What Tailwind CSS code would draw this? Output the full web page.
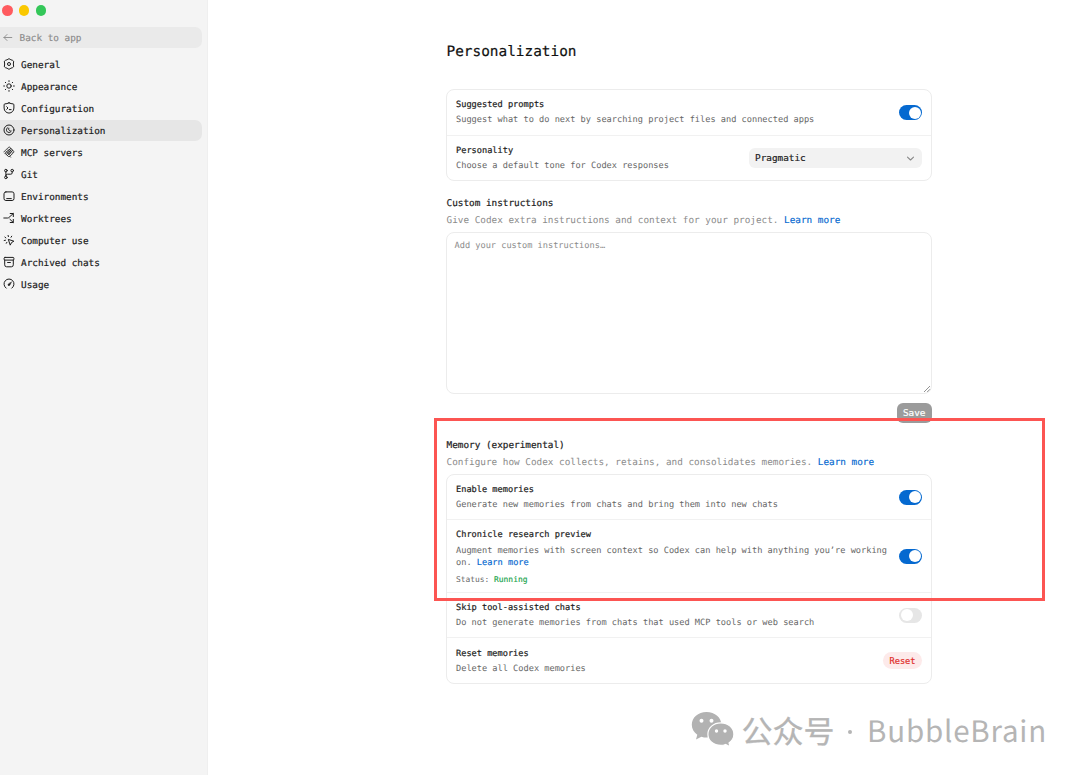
<!DOCTYPE html>
<html lang="en">
<head>
<meta charset="utf-8">
<title>Personalization</title>
<script src="https://cdn.jsdelivr.net/npm/@tailwindcss/browser@4"></script>
</head>
<body class="relative flex h-[775px] w-[1080px] overflow-hidden bg-white font-['DejaVu_Sans_Mono',monospace] text-[#1c1c1c] [text-rendering:geometricPrecision]">

<aside class="flex w-[208px] shrink-0 flex-col border-r border-[#efefef] bg-[#f4f4f4]">
  <div class="flex h-[27px] gap-[6.3px] pt-[5px] pl-[2px]">
    <span class="size-[10.5px] rounded-full bg-[#ff5b5f]"></span>
    <span class="size-[10.5px] rounded-full bg-[#fac800]"></span>
    <span class="size-[10.5px] rounded-full bg-[#34c759]"></span>
  </div>
  <div class="mr-[5.5px] flex h-[21px] items-center gap-[5.5px] rounded-r-[7px] bg-[#eaeaea] pl-[2px] text-[9.36px] text-[#8b8b8b] [-webkit-text-stroke:0.15px]">
    <svg class="size-[12px]" viewBox="0 0 12 12" fill="none" stroke="currentColor" stroke-width="0.9" stroke-linecap="round" stroke-linejoin="round"><path d="M2 5.5H9.8M5 2.5L2 5.5L5 8.5"/></svg>
    <span class="pt-[3px]">Back to app</span>
  </div>
  <nav class="mt-[6px] flex flex-col gap-px text-[9.36px] [-webkit-text-stroke:0.2px] [&_span]:pt-[3px] [&_svg]:mb-px">
    <a class="mr-[5.5px] flex h-[21px] items-center gap-[6.5px] pl-[2.5px]"><svg class="size-[12px]" viewBox="0 0 12 12" fill="none" stroke="currentColor" stroke-width="1" stroke-linejoin="round"><path d="M5.1 1.1Q6 .5 6.9 1.1L7.9 1.8L9.5 2.3Q10.6 2.8 10.7 3.8L10.4 5L10.4 7L10.7 8.2Q10.6 9.2 9.5 9.7L7.9 10.2L6.9 10.9Q6 11.5 5.1 10.9L4.1 10.2L2.5 9.7Q1.4 9.2 1.3 8.2L1.6 7L1.6 5L1.3 3.8Q1.4 2.8 2.5 2.3L4.1 1.8Z"/><circle cx="6" cy="6" r="1.5"/></svg><span>General</span></a>
    <a class="mr-[5.5px] flex h-[21px] items-center gap-[6.5px] pl-[2.5px]"><svg class="size-[12px]" viewBox="0 0 12 12" fill="none" stroke="currentColor" stroke-width="1" stroke-linecap="round"><circle cx="6" cy="6" r="2.2"/><path d="M6 .7V1.5M6 10.5V11.3M.7 6H1.5M10.5 6H11.3M2.3 2.3L2.8 2.8M9.2 9.2L9.7 9.7M2.3 9.7L2.8 9.2M9.2 2.8L9.7 2.3"/></svg><span>Appearance</span></a>
    <a class="mr-[5.5px] flex h-[21px] items-center gap-[6.5px] pl-[2.5px]"><svg class="size-[12px]" viewBox="0 0 12 12" fill="none" stroke="currentColor" stroke-width="1" stroke-linecap="round" stroke-linejoin="round"><path d="M6 .9C4.6 1.6 3.2 1.8 1.9 1.9Q1.1 2 1.1 2.8V6C1.1 9 3.2 10.9 6 11.1C8.8 10.9 10.9 9 10.9 6V2.8Q10.9 2 10.1 1.9C8.8 1.8 7.4 1.6 6 .9ZM3.7 4.7L5 6L3.7 7.3M6.3 7.6H8.1"/></svg><span>Configuration</span></a>
    <a class="mr-[5.5px] flex h-[21px] items-center gap-[6.5px] rounded-r-[7px] bg-[#e6e6e6] pl-[2.5px]"><svg class="size-[12px]" viewBox="0 0 12 12" fill="none" stroke="currentColor" stroke-width="1" stroke-linecap="round" stroke-linejoin="round"><circle cx="6" cy="6" r="5"/><path d="M4.8 3.5C2.9 4.5 2.9 7.5 5.1 8.3C6.5 8.8 7.9 8.1 8.4 7M5.8 4.2C5.2 5.4 5.8 6.7 7.2 6.8"/></svg><span>Personalization</span></a>
    <a class="mr-[5.5px] flex h-[21px] items-center gap-[6.5px] pl-[2.5px]"><svg class="size-[12px]" viewBox="0 0 12 12" fill="none" stroke="currentColor" stroke-width="0.8" stroke-linecap="round" stroke-linejoin="round"><path d="M.8 6L5.4 1.4Q6.4 .6 7.2 1.5Q7.8 2.2 7.3 2.9Q8.4 2.4 9.1 3.2Q9.6 3.9 9.2 4.7Q10.2 4.3 10.8 5.2Q11.2 6 10.5 6.7L6.8 10.3L7.6 11.2M2 7.2L7.3 2.9M3.2 8.4L8.3 3.8M4.4 9.6L9.2 4.7M3.3 5.5L6.8 9M4.6 4.2L8.1 7.7M5.7 3.1L9.2 6.6M2 7.2L5.4 10.6L6.8 10.3"/></svg><span>MCP servers</span></a>
    <a class="mr-[5.5px] flex h-[21px] items-center gap-[6.5px] pl-[2.5px]"><svg class="size-[12px]" viewBox="0 0 12 12" fill="none" stroke="currentColor" stroke-width="1" stroke-linecap="round"><circle cx="2.9" cy="2.6" r="1.3"/><circle cx="9.2" cy="2.6" r="1.3"/><circle cx="2.9" cy="9.4" r="1.3"/><path d="M2.9 3.9V8.1M9.2 3.9V4.8Q9.2 6.2 7.8 6.2H4.4Q2.9 6.2 2.9 7.5"/></svg><span>Git</span></a>
    <a class="mr-[5.5px] flex h-[21px] items-center gap-[6.5px] pl-[2.5px]"><svg class="size-[12px]" viewBox="0 0 12 12" fill="none" stroke="currentColor" stroke-width="1" stroke-linecap="round"><rect x="1" y="1.9" width="10" height="8.6" rx="1.9"/><path d="M3.7 8.6H8.3"/></svg><span>Environments</span></a>
    <a class="mr-[5.5px] flex h-[21px] items-center gap-[6.5px] pl-[2.5px]"><svg class="size-[12px]" viewBox="0 0 12 12" fill="none" stroke="currentColor" stroke-width="1" stroke-linecap="round" stroke-linejoin="round"><path d="M.8 6H4.7Q5.4 6 6 5.4L10.3 1.5M7.2 1.5H10.3V4.6M6.9 7.3L10.3 10.5M10.3 7.4V10.5H7.2"/></svg><span>Worktrees</span></a>
    <a class="mr-[5.5px] flex h-[21px] items-center gap-[6.5px] pl-[2.5px]"><svg class="size-[12px]" viewBox="0 0 12 12" fill="none" stroke="currentColor" stroke-width="1" stroke-linecap="round" stroke-linejoin="round"><path d="M5.7 5.5L10.9 7.2L8.6 8.5L7.4 10.8ZM5.1 1.4L5.4 2.6M8.7 2.2L8 3.3M1.9 3.1L2.9 3.9M1.2 6.5L2.5 6.2M3.3 9.3L3.9 8.3"/></svg><span>Computer use</span></a>
    <a class="mr-[5.5px] flex h-[21px] items-center gap-[6.5px] pl-[2.5px]"><svg class="size-[12px]" viewBox="0 0 12 12" fill="none" stroke="currentColor" stroke-width="1" stroke-linecap="round"><rect x="1.1" y="1.4" width="9.8" height="2.7" rx=".9"/><path d="M1.7 4.1V8.8Q1.7 10.8 3.6 10.8H8.4Q10.3 10.8 10.3 8.8V4.1M4.6 6.5H7.4"/></svg><span>Archived chats</span></a>
    <a class="mr-[5.5px] flex h-[21px] items-center gap-[6.5px] pl-[2.5px]"><svg class="size-[12px]" viewBox="0 0 12 12" fill="none" stroke="currentColor" stroke-width="1" stroke-linecap="round" stroke-linejoin="round"><path d="M3.2 10.2A5 5 0 1 1 8.8 10.2"/><path d="M8.4 4.2L6.8 7.2Q6 8 5.2 7.4Q4.7 6.6 5.4 5.9Z" fill="currentColor" stroke-width=".5"/></svg><span>Usage</span></a>
  </nav>
</aside>

<main class="flex w-[724px] shrink-0 flex-col pl-[238px] text-[8.64px] whitespace-nowrap">
  <h1 class="mt-[42px] h-[20px] pl-[0.5px] text-[14.4px] leading-[20px] text-[#111] [-webkit-text-stroke:0.2px]">Personalization</h1>

  <section class="mt-[27px] h-[92px] rounded-[8px] border border-[#ececec]">
    <div class="flex h-[46px] items-center justify-between border-b border-[#f1f1f1] pr-[9px] pl-[9px]">
      <div class="pt-[1px] leading-[15px]">
        <h2 class="[-webkit-text-stroke:0.2px]">Suggested prompts</h2>
        <p class="text-[#666]">Suggest what to do next by searching project files and connected apps</p>
      </div>
      <span class="flex h-[15px] w-[23.5px] items-center justify-end rounded-full bg-[#0569d0] pr-[1.5px]"><i class="size-[12px] rounded-full bg-white"></i></span>
    </div>
    <div class="flex h-[44px] items-center justify-between pr-[9px] pl-[9px]">
      <div class="pt-[2px] leading-[15px]">
        <h2 class="[-webkit-text-stroke:0.2px]">Personality</h2>
        <p class="text-[#666]">Choose a default tone for Codex responses</p>
      </div>
      <button class="flex h-[20px] w-[173px] items-center justify-between rounded-[6px] bg-[#f2f2f2] pr-[7px] pl-[6px] text-[9.36px] [-webkit-text-stroke:0.2px]"><span>Pragmatic</span><svg class="size-[9px] text-[#888]" viewBox="0 0 9 9" fill="none" stroke="currentColor" stroke-width="1.1" stroke-linecap="round" stroke-linejoin="round"><path d="M1.5 3.2L4.5 6L7.5 3.2"/></svg></button>
    </div>
  </section>

  <h2 class="mt-[15px] pl-[0.5px] text-[9.36px] leading-[16px] [-webkit-text-stroke:0.2px]">Custom instructions</h2>
  <p class="mt-px pl-[0.5px] text-[9.36px] leading-[16px] text-[#8b8b8b]">Give Codex extra instructions and context for your project. <a class="text-[#0569d0] [-webkit-text-stroke:0.15px]">Learn more</a></p>
  <div class="mt-[3px] flex h-[162px] flex-col justify-between rounded-[8px] border border-[#ececec] pt-[6px] pl-[7.5px]">
    <p class="leading-[15px] text-[#8b8b8b]">Add your custom instructions…</p>
    <svg class="size-[8px] self-end" viewBox="0 0 8 8" fill="none" stroke="#777" stroke-width=".8"><path d="M1 7L7 1M4.2 7L7 4.2"/></svg>
  </div>
  <button class="mt-[9px] flex h-[20px] w-[35.5px] items-center justify-center self-end rounded-[6px] bg-[#9b9b9b] text-[9.36px] text-white [-webkit-text-stroke:0.2px]">Save</button>

  <h2 class="mt-[15px] pl-[0.5px] text-[9.36px] leading-[16px] [-webkit-text-stroke:0.2px]">Memory (experimental)</h2>
  <p class="mt-px pl-[0.5px] text-[9.36px] leading-[16px] text-[#8b8b8b]">Configure how Codex collects, retains, and consolidates memories. <a class="text-[#0569d0] [-webkit-text-stroke:0.15px]">Learn more</a></p>
  <section class="mt-[3px] h-[210px] rounded-[8px] border border-[#ececec]">
    <div class="flex h-[45px] items-center justify-between border-b border-[#f1f1f1] pr-[9px] pl-[9px]">
      <div class="pt-[2px] leading-[15px]">
        <h3 class="[-webkit-text-stroke:0.2px]">Enable memories</h3>
        <p class="text-[#666]">Generate new memories from chats and bring them into new chats</p>
      </div>
      <span class="flex h-[15px] w-[23.5px] items-center justify-end rounded-full bg-[#0569d0] pr-[1.5px]"><i class="size-[12px] rounded-full bg-white"></i></span>
    </div>
    <div class="flex h-[73px] items-center justify-between border-b border-[#f1f1f1] pr-[9px] pl-[9px]">
      <div class="pt-[2px] text-[#666]">
        <h3 class="leading-[15px] text-[#1c1c1c] [-webkit-text-stroke:0.2px]">Chronicle research preview</h3>
        <p class="mt-[2px] leading-[12.5px]">Augment memories with screen context so Codex can help with anything you’re working<br>on. <a class="text-[#0569d0] [-webkit-text-stroke:0.15px]">Learn more</a></p>
        <p class="mt-[2px] text-[7.92px] leading-[15px]">Status: <span class="text-[#16a34a] [-webkit-text-stroke:0.15px]">Running</span></p>
      </div>
      <span class="flex h-[15px] w-[23.5px] items-center justify-end rounded-full bg-[#0569d0] pr-[1.5px]"><i class="size-[12px] rounded-full bg-white"></i></span>
    </div>
    <div class="flex h-[45px] items-center justify-between border-b border-[#f1f1f1] pr-[9px] pl-[9px]">
      <div class="pt-[2px] leading-[15px]">
        <h3 class="[-webkit-text-stroke:0.2px]">Skip tool-assisted chats</h3>
        <p class="text-[#666]">Do not generate memories from chats that used MCP tools or web search</p>
      </div>
      <span class="flex h-[15px] w-[23.5px] items-center rounded-full bg-[#e6e6e6] pl-[2px]"><i class="size-[12px] rounded-full bg-white"></i></span>
    </div>
    <div class="flex h-[45px] items-center justify-between pr-[9px] pl-[9px]">
      <div class="pt-[2px] leading-[15px]">
        <h3 class="[-webkit-text-stroke:0.2px]">Reset memories</h3>
        <p class="text-[#666]">Delete all Codex memories</p>
      </div>
      <button class="flex h-[17px] w-[39px] items-center justify-center rounded-full bg-[#fdeaea] pt-px text-[8.64px] text-[#e02e2a] [-webkit-text-stroke:0.2px]">Reset</button>
    </div>
  </section>
</main>

<!-- Highlight frame around the memory section -->
<div class="absolute top-[417.5px] left-[434px] h-[183px] w-[611px] border-3 border-[#fc5552]"></div>

<!-- Watermark -->
<div class="absolute top-[707px] left-[691px] flex h-[46px] items-center font-['Noto_Sans_CJK_SC',sans-serif] text-[31px] whitespace-nowrap text-[#b5b5b5]">
  <svg class="h-[36px] w-[44px]" viewBox="0 0 44 36"><path fill="#b2b2b2" d="M15.5 0C7 0 .8 5.5.8 12.8C.8 17 3 20.4 6.3 22.7L5 27.4L10.4 24.7Q13 25.6 15.5 25.6C24 25.6 30.4 20 30.4 12.8C30.4 5.5 24 0 15.5 0Z"/><path fill="#b2b2b2" stroke="#fff" stroke-width="1.2" d="M29.8 10.8C22.5 10.8 16.9 15.8 16.9 22.2C16.9 28.6 22.5 33.4 29.8 33.4Q32.3 33.4 34.5 32.5L39.2 34.8L38 30.9C41 28.8 42.9 25.9 42.9 22.2C42.9 15.8 37.1 10.8 29.8 10.8Z"/><g fill="#fff"><circle cx="10.5" cy="8.8" r="2"/><circle cx="20.5" cy="8.8" r="2"/><circle cx="25.5" cy="19" r="1.7"/><circle cx="34" cy="19" r="1.7"/></g></svg>
  <span class="ml-[6.5px] w-[94.5px] [-webkit-text-stroke:0.3px]">公众号</span>
  <span class="mt-[4px] ml-[12px] size-[4px] rounded-full bg-[#b5b5b5]"></span>
  <span class="ml-[15px] text-[29.5px] tracking-[0.8px]">BubbleBrain</span>
</div>
</body>
</html>
